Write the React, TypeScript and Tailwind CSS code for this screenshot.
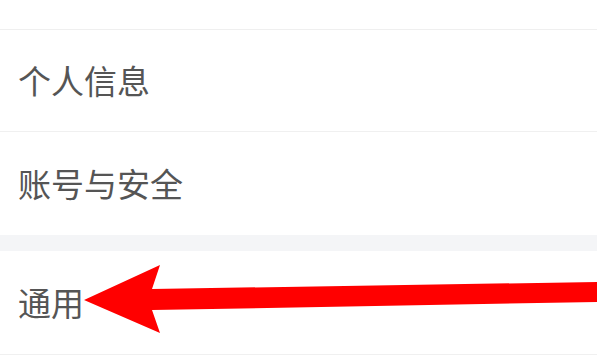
import React from "react";

const rowText = "text-[33px] leading-none text-[#555555]";

function Row({ label, height }: { label: string; height: string }) {
  return (
    <div className={`flex items-center pl-[18px] bg-white ${height}`}>
      <span className={rowText}>{label}</span>
    </div>
  );
}

export default function App() {
  return (
    <div
      className="relative w-[597px] h-[360px] overflow-hidden bg-white"
      style={{ fontFamily: '"Noto Sans CJK SC", "Noto Sans", sans-serif' }}
    >
      {/* cut-off item above */}
      <div className="h-[29px] bg-white" />
      <div className="h-px bg-[#efefef]" />

      <div className="flex items-center pl-[18px] h-[101px] bg-white">
        <span className={rowText}>个人信息</span>
      </div>
      <div className="h-px bg-[#f0f0f0]" />
      <div className="flex items-center pl-[18px] h-[103px] bg-white">
        <span className={rowText}>账号与安全</span>
      </div>

      {/* group gap */}
      <div className="h-[16px] bg-[#f4f5f7]" />

      <div className="flex items-center pl-[18px] h-[103px] bg-white">
        <span className={rowText}>通用</span>
      </div>
      <div className="h-px bg-[#f0f0f0]" />

      {/* red annotation arrow */}
      <svg
        className="absolute left-0 top-0 pointer-events-none"
        width="597"
        height="360"
        viewBox="0 0 597 360"
      >
        <polygon
          points="84,300 160,265 152,289 597,282 597,302 152,310 160,333"
          fill="#ff0000"
        />
      </svg>
    </div>
  );
}
